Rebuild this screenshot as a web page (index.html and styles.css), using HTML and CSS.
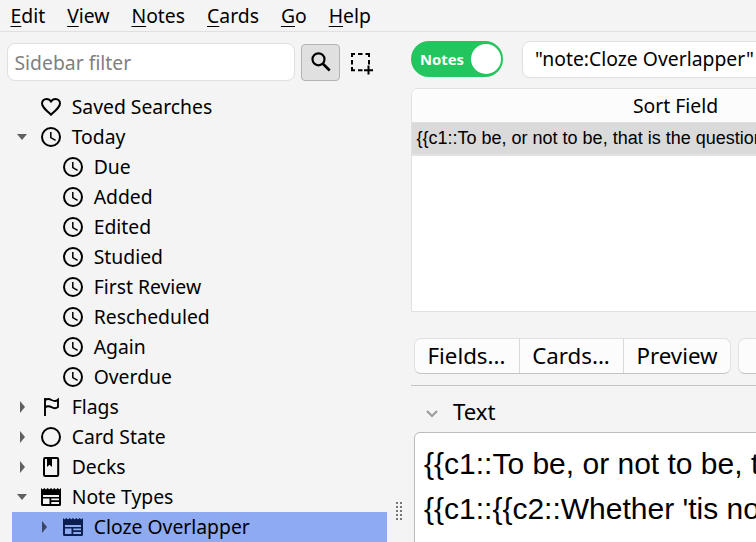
FILE: index.html
```html
<!DOCTYPE html>
<html lang="en">
<head>
<meta charset="utf-8">
<title>Browse</title>
<link rel="stylesheet" href="styles.css">
</head>
<body>
<svg class="defs" aria-hidden="true">
  <symbol id="clock" viewBox="0 0 20 20"><circle cx="10" cy="10" r="9" fill="none" stroke="currentColor" stroke-width="2"/><path d="M9.8 5v5.6l4.8 2.8" fill="none" stroke="currentColor" stroke-width="1.5"/></symbol>
  <symbol id="heart" viewBox="0 0 20 20"><path d="M10 17.700C4.5 12.700 1 9.800 1 6.500C1 3.800 3 1.900 5.500 1.900C7.300 1.900 9 2.800 10 4.400C11 2.800 12.700 1.900 14.500 1.900C17 1.900 19 3.800 19 6.500C19 9.800 15.500 12.700 10 17.700Z" fill="none" stroke="currentColor" stroke-width="2"/></symbol>
  <symbol id="flag" viewBox="0 0 20 20"><path d="M4 1v18M4 3.200C6 1.600 8 1.600 10.500 3C13 4.300 15.300 4.300 17 2.700V10C15 11.600 13 11.600 10.500 10.200C8 8.900 6 8.900 4 10.500" fill="none" stroke="currentColor" stroke-width="1.9"/></symbol>
  <symbol id="circle" viewBox="0 0 20 20"><circle cx="10" cy="10" r="9" fill="none" stroke="currentColor" stroke-width="2"/></symbol>
  <symbol id="deck" viewBox="0 0 20 20"><rect x="3" y="1" width="14.200" height="18" rx="1.200" fill="none" stroke="currentColor" stroke-width="2"/><path d="M6 1h5v9L8.500 7.800 6 10z" fill="currentColor"/></symbol>
  <symbol id="news" viewBox="0 0 20 20"><path d="M0 1l1.700 1.500L3.300 1 5 2.500 6.700 1l1.600 1.500L10 1l1.700 1.500L13.300 1 15 2.500 16.700 1l1.600 1.500L20 1v16.500q0 1.500-1.500 1.500h-17Q0 19 0 17.500zM2 8v2h16V8zM2 11.500V17h6.500v-5.500zM10.300 11.500V13.300H18v-1.800zM10.300 15v2H18v-2z" fill="currentColor" fill-rule="evenodd"/></symbol>
</svg>

<nav class="menubar">
  <span><u>E</u>dit</span><span><u>V</u>iew</span><span><u>N</u>otes</span><span><u>C</u>ards</span><span><u>G</u>o</span><span><u>H</u>elp</span>
</nav>
<div class="window">
  <aside class="sidebar">
    <div class="filter-row">
      <div class="filter">Sidebar filter</div>
      <div class="tool active"><svg width="20" height="20" viewBox="0 0 20 20"><circle cx="7.500" cy="7.300" r="6" fill="none" stroke="#000" stroke-width="2.200"/><path d="M11.700 11.500l7 7" stroke="#000" stroke-width="2.600"/></svg></div>
      <svg class="select-tool" width="22" height="22" viewBox="0 0 22 22"><path d="M1 4V1H4M7 1h4.500M14.500 1H18v3M18 7v4.500M1 7v4.500M1 14v3.200h3M7 17.200h4.500M13 17.200h9M17.500 12.500v9" fill="none" stroke="#000" stroke-width="2"/></svg>
    </div>
    <div class="tree">
      <div class="item"><i></i><svg><use href="#heart"/></svg>Saved Searches</div>
      <div class="item"><i class="open"></i><svg><use href="#clock"/></svg>Today</div>
      <div class="item child"><i></i><svg><use href="#clock"/></svg>Due</div>
      <div class="item child"><i></i><svg><use href="#clock"/></svg>Added</div>
      <div class="item child"><i></i><svg><use href="#clock"/></svg>Edited</div>
      <div class="item child"><i></i><svg><use href="#clock"/></svg>Studied</div>
      <div class="item child"><i></i><svg><use href="#clock"/></svg>First Review</div>
      <div class="item child"><i></i><svg><use href="#clock"/></svg>Rescheduled</div>
      <div class="item child"><i></i><svg><use href="#clock"/></svg>Again</div>
      <div class="item child"><i></i><svg><use href="#clock"/></svg>Overdue</div>
      <div class="item"><i class="closed"></i><svg><use href="#flag"/></svg>Flags</div>
      <div class="item"><i class="closed"></i><svg><use href="#circle"/></svg>Card State</div>
      <div class="item"><i class="closed"></i><svg><use href="#deck"/></svg>Decks</div>
      <div class="item"><i class="open"></i><svg><use href="#news"/></svg>Note Types</div>
      <div class="item child selected"><i class="closed"></i><svg><use href="#news"/></svg>Cloze Overlapper</div>
    </div>
  </aside>
  <div class="splitter"><div class="grip"></div></div>
  <main class="main">
    <div class="search-row">
      <div class="toggle"><span>Notes</span><b></b></div>
      <div class="search">"note:Cloze Overlapper"</div>
    </div>
    <div class="table">
      <div class="thead">Sort Field</div>
      <div class="row">{{c1::To be, or not to be, that is the question</div>
    </div>
    <div class="buttons">
      <div class="group"><span class="fields">Fields...</span><span class="cards">Cards...</span><span class="preview">Preview</span></div>
      <div class="group extra"></div>
    </div>
    <div class="editor">
      <div class="label"><svg width="12" height="8" viewBox="0 0 12 8"><path d="M1 1l5 5 5-5" fill="none" stroke="#999" stroke-width="2"/></svg>Text</div>
      <div class="field"><p>{{c1::To be, or not to be, t</p><p>{{c1::{{c2::Whether 'tis no</p></div>
    </div>
  </main>
</div>
</body>
</html>
```
FILE: styles.css
```css
* { box-sizing: border-box; }
body {
  margin: 0;
  width: 756px;
  height: 542px;
  overflow: hidden;
  background: #f4f4f4;
  color: #000;
  font: 19.35px/30px "Noto Sans", sans-serif;
  white-space: nowrap;
}
.defs { display: none; }
.menubar {
  display: flex;
  gap: 22px;
  height: 32px;
  padding: 1px 0 0 10.500px;
  border-bottom: 1px solid #e0e0e0;
}
.menubar u { text-decoration-thickness: 1px; text-underline-offset: 3px; text-decoration-skip-ink: none; }
.window { display: flex; height: 510px; }
.sidebar { width: 387px; flex: none; }
.filter-row { display: flex; padding: 11px 0 0 7px; height: 60px; }
.filter {
  width: 288px;
  height: 38px;
  padding: 4px 6.500px;
  border: 1px solid #e0e0e0;
  border-radius: 8px;
  background: #fff;
  color: #808080;
}
.tool.active {
  width: 39px;
  height: 37px;
  margin: 1px 0 0 6px;
  padding: 7px 0 0 8.500px;
  border: 1px solid #b4b4b4;
  border-radius: 4px;
  background: #e0e0e0;
  line-height: 0;
}
.select-tool { margin: 10px 0 0 11px; }
.tree { padding-left: 12px; }
.item { display: flex; align-items: center; height: 30px; }
.item svg { width: 20px; height: 20px; margin-right: 10.700px; flex: none; }
.item i { width: 29px; flex: none; display: flex; padding-left: 5px; }
.item.child { padding-left: 22px; }
.item i.open::before { content: ""; border: 5.500px solid transparent; border-top: 6px solid #606060; border-bottom: 0; }
.item i.closed::before { content: ""; margin-left: 3px; border: 6px solid transparent; border-left: 5.500px solid #606060; border-right: 0; }
.item.selected { background: #8eaaf0; }
.item.selected svg { color: #0c1d50; }
.item.selected i.closed::before { border-left-color: #3b4663; }
.splitter { width: 24px; flex: none; padding: 470px 0 0 9px; }
.grip { width: 7px; height: 19px; background: repeating-linear-gradient(#777 0 2px, transparent 2px 4px); mask: linear-gradient(90deg, #000 0 2px, transparent 2px 4px, #000 4px 6px, transparent 6px); }
.main { width: 345px; flex: none; overflow: hidden; }
.search-row { display: flex; gap: 19px; padding-top: 9px; }
.toggle {
  width: 92px;
  height: 36px;
  flex: none;
  display: flex;
  align-items: center;
  justify-content: space-between;
  padding: 0 2.500px 0 9px;
  border-radius: 18px;
  background: #22c55e;
  color: #fff;
  font-size: 14.800px;
  font-weight: 700;
}
.toggle b { width: 30px; height: 30px; border-radius: 50%; background: #fff; }
.search {
  width: 260px;
  height: 37px;
  flex: none;
  padding: 2px 12px;
  border: 1px solid #e0e0e0;
  border-radius: 8px;
  background: #fff;
}
.table {
  width: 540px;
  height: 224px;
  margin-top: 10px;
  border: 1px solid #e0e0e0;
  border-top-left-radius: 7px;
  background: #fff;
  overflow: hidden;
}
.thead { height: 34px; padding: 2px 0 0 221px; border-bottom: 1px solid #e0e0e0; background: #fcfcfc; }
.row { height: 33px; padding: 0 0 0 4.500px; border-bottom: 2px solid #e3e3e3; background: #dadada; font: 18px/31px "Liberation Sans", sans-serif; }
.buttons { display: flex; gap: 7px; height: 74px; padding: 26px 0 0 3px; border-bottom: 1px solid #c4c4c4; font-size: 22.3px; }
.group { display: flex; height: 36px; flex: none; border: 1px solid #e0e0e0; border-bottom-color: #c4c4c4; border-radius: 7px; background: #fcfcfc; line-height: 34px; text-align: center; }
.group span + span { border-left: 1px solid #d9d9d9; }
.fields { width: 104px; padding-right: 1px; }
.cards { width: 104px; padding-right: 1px; }
.preview { width: 107px; }
.extra { width: 60px; }
.editor { padding-left: 3px; }
.label { display: flex; align-items: center; gap: 15px; height: 46px; padding: 5px 0 0 12px; font-size: 22.2px; }
.label svg { margin-top: 5px; }
.field { width: 500px; height: 150px; padding: 8px 9px; border: 1px solid #bcbcbc; border-radius: 6px; background: #fff; font: 30px/45px "Liberation Sans", sans-serif; }
.field p { margin: 0; }
```
